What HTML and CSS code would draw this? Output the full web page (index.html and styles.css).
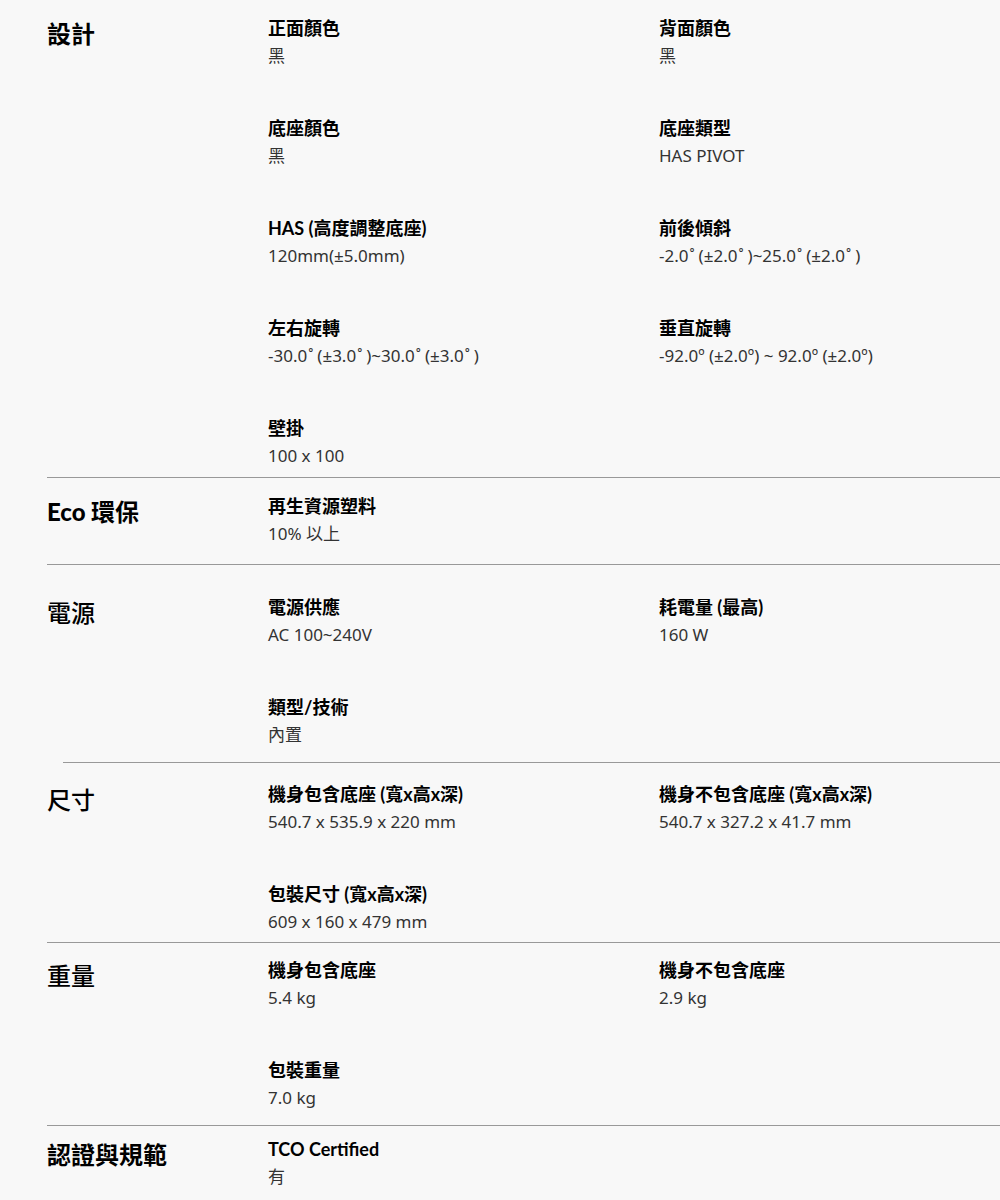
FILE: index.html
```html
<!DOCTYPE html>
<html lang="zh-Hant">
<head>
<meta charset="utf-8">
<title>規格</title>
<link rel="stylesheet" href="styles.css">
</head>
<body>
<div class="specs">
  <section class="spec spec-design">
    <h2 class="spec-title">設計</h2>
    <div class="spec-grid">
      <div class="item"><div class="label">正面顏色</div><div class="value">黑</div></div>
      <div class="item"><div class="label">背面顏色</div><div class="value">黑</div></div>
      <div class="item"><div class="label">底座顏色</div><div class="value">黑</div></div>
      <div class="item"><div class="label">底座類型</div><div class="value">HAS PIVOT</div></div>
      <div class="item"><div class="label">HAS (高度調整底座)</div><div class="value">120mm(±5.0mm)</div></div>
      <div class="item"><div class="label">前後傾斜</div><div class="value">-2.0<span class="deg">˚</span>(±2.0<span class="deg">˚</span>)~25.0<span class="deg">˚</span>(±2.0<span class="deg">˚</span>)</div></div>
      <div class="item"><div class="label">左右旋轉</div><div class="value">-30.0<span class="deg">˚</span>(±3.0<span class="deg">˚</span>)~30.0<span class="deg">˚</span>(±3.0<span class="deg">˚</span>)</div></div>
      <div class="item"><div class="label">垂直旋轉</div><div class="value">-92.0º (±2.0º) ~ 92.0º (±2.0º)</div></div>
      <div class="item"><div class="label">壁掛</div><div class="value">100 x 100</div></div>
    </div>
  </section>
  <section class="spec spec-eco">
    <h2 class="spec-title"><span class="eco">Eco</span> 環保</h2>
    <div class="spec-grid">
      <div class="item"><div class="label">再生資源塑料</div><div class="value">10% 以上</div></div>
    </div>
  </section>
  <section class="spec spec-power">
    <h2 class="spec-title title-medium">電源</h2>
    <div class="spec-grid">
      <div class="item"><div class="label">電源供應</div><div class="value">AC 100~240V</div></div>
      <div class="item"><div class="label">耗電量 (最高)</div><div class="value">160 W</div></div>
      <div class="item"><div class="label">類型/技術</div><div class="value">內置</div></div>
    </div>
  </section>
  <section class="spec spec-size">
    <h2 class="spec-title title-medium">尺寸</h2>
    <div class="spec-grid">
      <div class="item"><div class="label">機身包含底座 (寬x高x深)</div><div class="value">540.7 x 535.9 x 220 mm</div></div>
      <div class="item"><div class="label">機身不包含底座 (寬x高x深)</div><div class="value">540.7 x 327.2 x 41.7 mm</div></div>
      <div class="item"><div class="label">包裝尺寸 (寬x高x深)</div><div class="value">609 x 160 x 479 mm</div></div>
    </div>
  </section>
  <section class="spec spec-weight">
    <h2 class="spec-title title-medium">重量</h2>
    <div class="spec-grid">
      <div class="item"><div class="label">機身包含底座</div><div class="value">5.4 kg</div></div>
      <div class="item"><div class="label">機身不包含底座</div><div class="value">2.9 kg</div></div>
      <div class="item"><div class="label">包裝重量</div><div class="value">7.0 kg</div></div>
    </div>
  </section>
  <section class="spec spec-cert">
    <h2 class="spec-title">認證與規範</h2>
    <div class="spec-grid">
      <div class="item"><div class="label">TCO Certified</div><div class="value">有</div></div>
    </div>
  </section>
</div>
</body>
</html>
```

FILE: styles.css
```css
html, body {
  margin: 0;
  padding: 0;
  background: #f8f8f8;
}

body {
  font-family: "Noto Sans", "Noto Sans CJK TC", sans-serif;
  color: #000;
}

.specs {
  display: flex;
  flex-direction: column;
}

.spec {
  display: grid;
  grid-template-columns: 221px 1fr;
  margin-left: 47px;
  border-top: 1px solid #999;
}

.spec-design {
  border-top: none;
  padding: 14px 0 7px;
}

.spec-eco {
  padding: 14px 0 16px;
}

.spec-power {
  padding: 28px 0 13px;
}

.spec-size {
  margin-left: 63px;
  grid-template-columns: 205px 1fr;
  padding: 17px 0 6px;
}

.spec-size .spec-title {
  margin-left: -16px;
}

.spec-weight {
  padding: 13px 0 13px;
}

.spec-cert {
  padding: 9px 0 10px;
}

.spec-title {
  margin: 5px 0 0;
  font-family: "Noto Sans CJK TC", sans-serif;
  font-size: 24px;
  line-height: 28px;
  font-weight: 700;
  color: #000;
}

.title-medium {
  font-weight: 500;
}

.eco {
  font-family: "Lato", "Noto Sans", sans-serif;
  font-weight: 900;
}

.spec-grid {
  display: grid;
  grid-template-columns: 391px 1fr;
  row-gap: 44px;
}

.item {
  display: flex;
  flex-direction: column;
}

.label {
  font-family: "Lato", "Noto Sans CJK TC", sans-serif;
  font-size: 18px;
  line-height: 28px;
  font-weight: 700;
  color: #000;
}

.value {
  font-family: "Noto Sans", "Noto Sans CJK TC", sans-serif;
  font-size: 17px;
  line-height: 28px;
  font-weight: 400;
  color: #333;
}

.deg {
  padding: 0 4px 0 1px;
}
```
